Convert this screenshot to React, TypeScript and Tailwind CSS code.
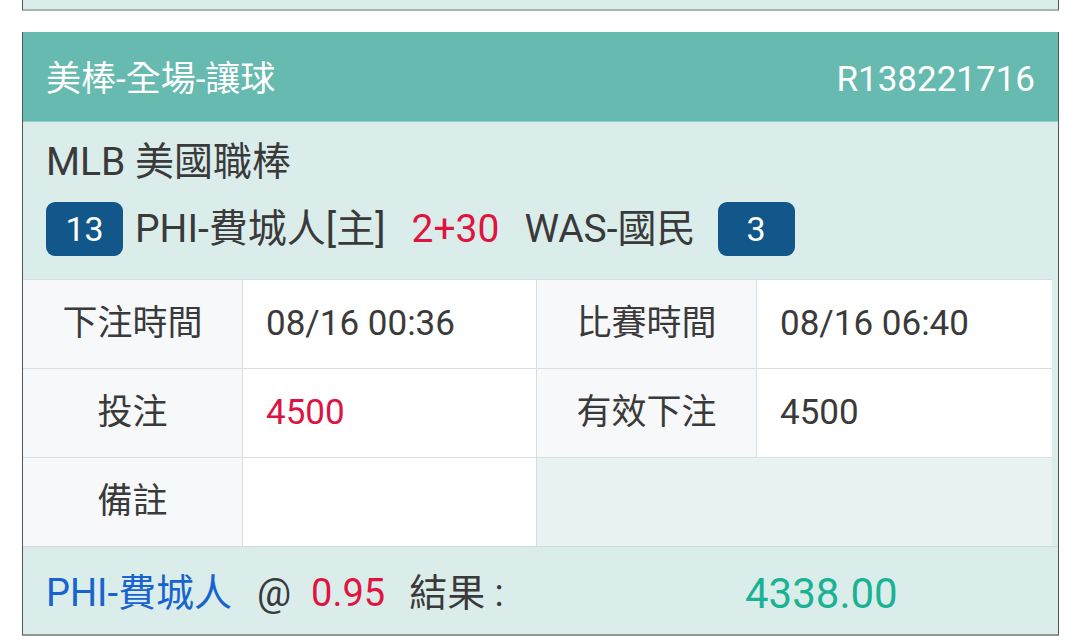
import React from "react"

const font = "font-['Roboto','Noto_Sans_CJK_TC',sans-serif]"

type Cell = {label: string; value: string; red?: boolean}

const rows: Cell[][] = [
  [
    {label: "下注時間", value: "08/16 00:36"},
    {label: "比賽時間", value: "08/16 06:40"},
  ],
  [
    {label: "投注", value: "4500", red: true},
    {label: "有效下注", value: "4500"},
  ],
]

const Badge = ({n}: {n: string}) => (
  <span className="flex h-[54px] w-[77px] items-center justify-center rounded-[9px] bg-[#12578a] text-[34px] text-white">
    {n}
  </span>
)

const Label = ({children}: {children: React.ReactNode}) => (
  <div className="flex w-[220px] items-center justify-center border-r border-[#d9dee4] bg-[#f7f8fa]">{children}</div>
)

export default function App() {
  return (
    <div className={`${font} min-h-[644px] w-[1080px] bg-white text-[#3a3a3a]`}>
      {/* previous card, cut off */}
      <div className="mx-[22px] h-[11px] w-[1037px] border-x border-b-2 border-x-[#555] border-b-[#a9b4b3] bg-[#dbedeb]" />

      <div className="mx-[22px] mt-[21px] w-[1037px] border-x border-b-2 border-x-[#555] border-b-[#8e9898] bg-[#dbedeb]">
        <div className="flex h-[90px] items-center justify-between border-b border-[#8fd0c8] bg-[#66bab0] px-[23px] pt-[8px] text-[35px] text-white">
          <span>美棒-全場-讓球</span>
          <span>R138221716</span>
        </div>

        <div className="flex h-[157px] flex-col px-[23px] pt-[17px] text-[39px]">
          <div className="leading-[46px]">MLB 美國職棒</div>
          <div className="mt-[17px] flex items-center leading-none">
            <Badge n="13" />
            <span className="ml-[12px]">PHI-費城人[主]</span>
            <span className="ml-[26px] text-[#e0143e]">2+30</span>
            <span className="ml-[25px]">WAS-國民</span>
            <span className="ml-[22px]">
              <Badge n="3" />
            </span>
          </div>
        </div>

        <div className="mr-[6px] border-t border-[#d9dee4] text-[35px]">
          {rows.map((row, i) => (
            <div key={i} className="flex h-[89px] border-b border-[#d9dee4]">
              {row.map((c, j) => (
                <div key={j} className={`flex ${j === 0 ? "w-[514px] border-r border-[#d9dee4]" : "flex-1"}`}>
                  <Label>{c.label}</Label>
                  <div className={`flex flex-1 items-center bg-white pl-[23px] ${c.red ? "text-[#dc1446]" : ""}`}>
                    {c.value}
                  </div>
                </div>
              ))}
            </div>
          ))}
          <div className="flex h-[88px]">
            <div className="flex w-[514px] border-r border-[#d9dee4]">
              <Label>備註</Label>
              <div className="flex-1 bg-white" />
            </div>
            <div className="flex-1 bg-[#e7f2f1]" />
          </div>
        </div>

        <div className="flex h-[88px] items-center border-t border-[#cfdcdb] px-[23px] pt-[6px] text-[38px]">
          <div className="flex w-[699px] shrink-0 items-center">
            <span className="text-[#1763cf]">PHI-費城人</span>
            <span className="ml-[25px]">@</span>
            <span className="ml-[20px] text-[#e0143e]">0.95</span>
            <span className="ml-[24px]">結果 :</span>
          </div>
          <span className="text-[42px] text-[#19b394]">4338.00</span>
        </div>
      </div>
    </div>
  )
}
